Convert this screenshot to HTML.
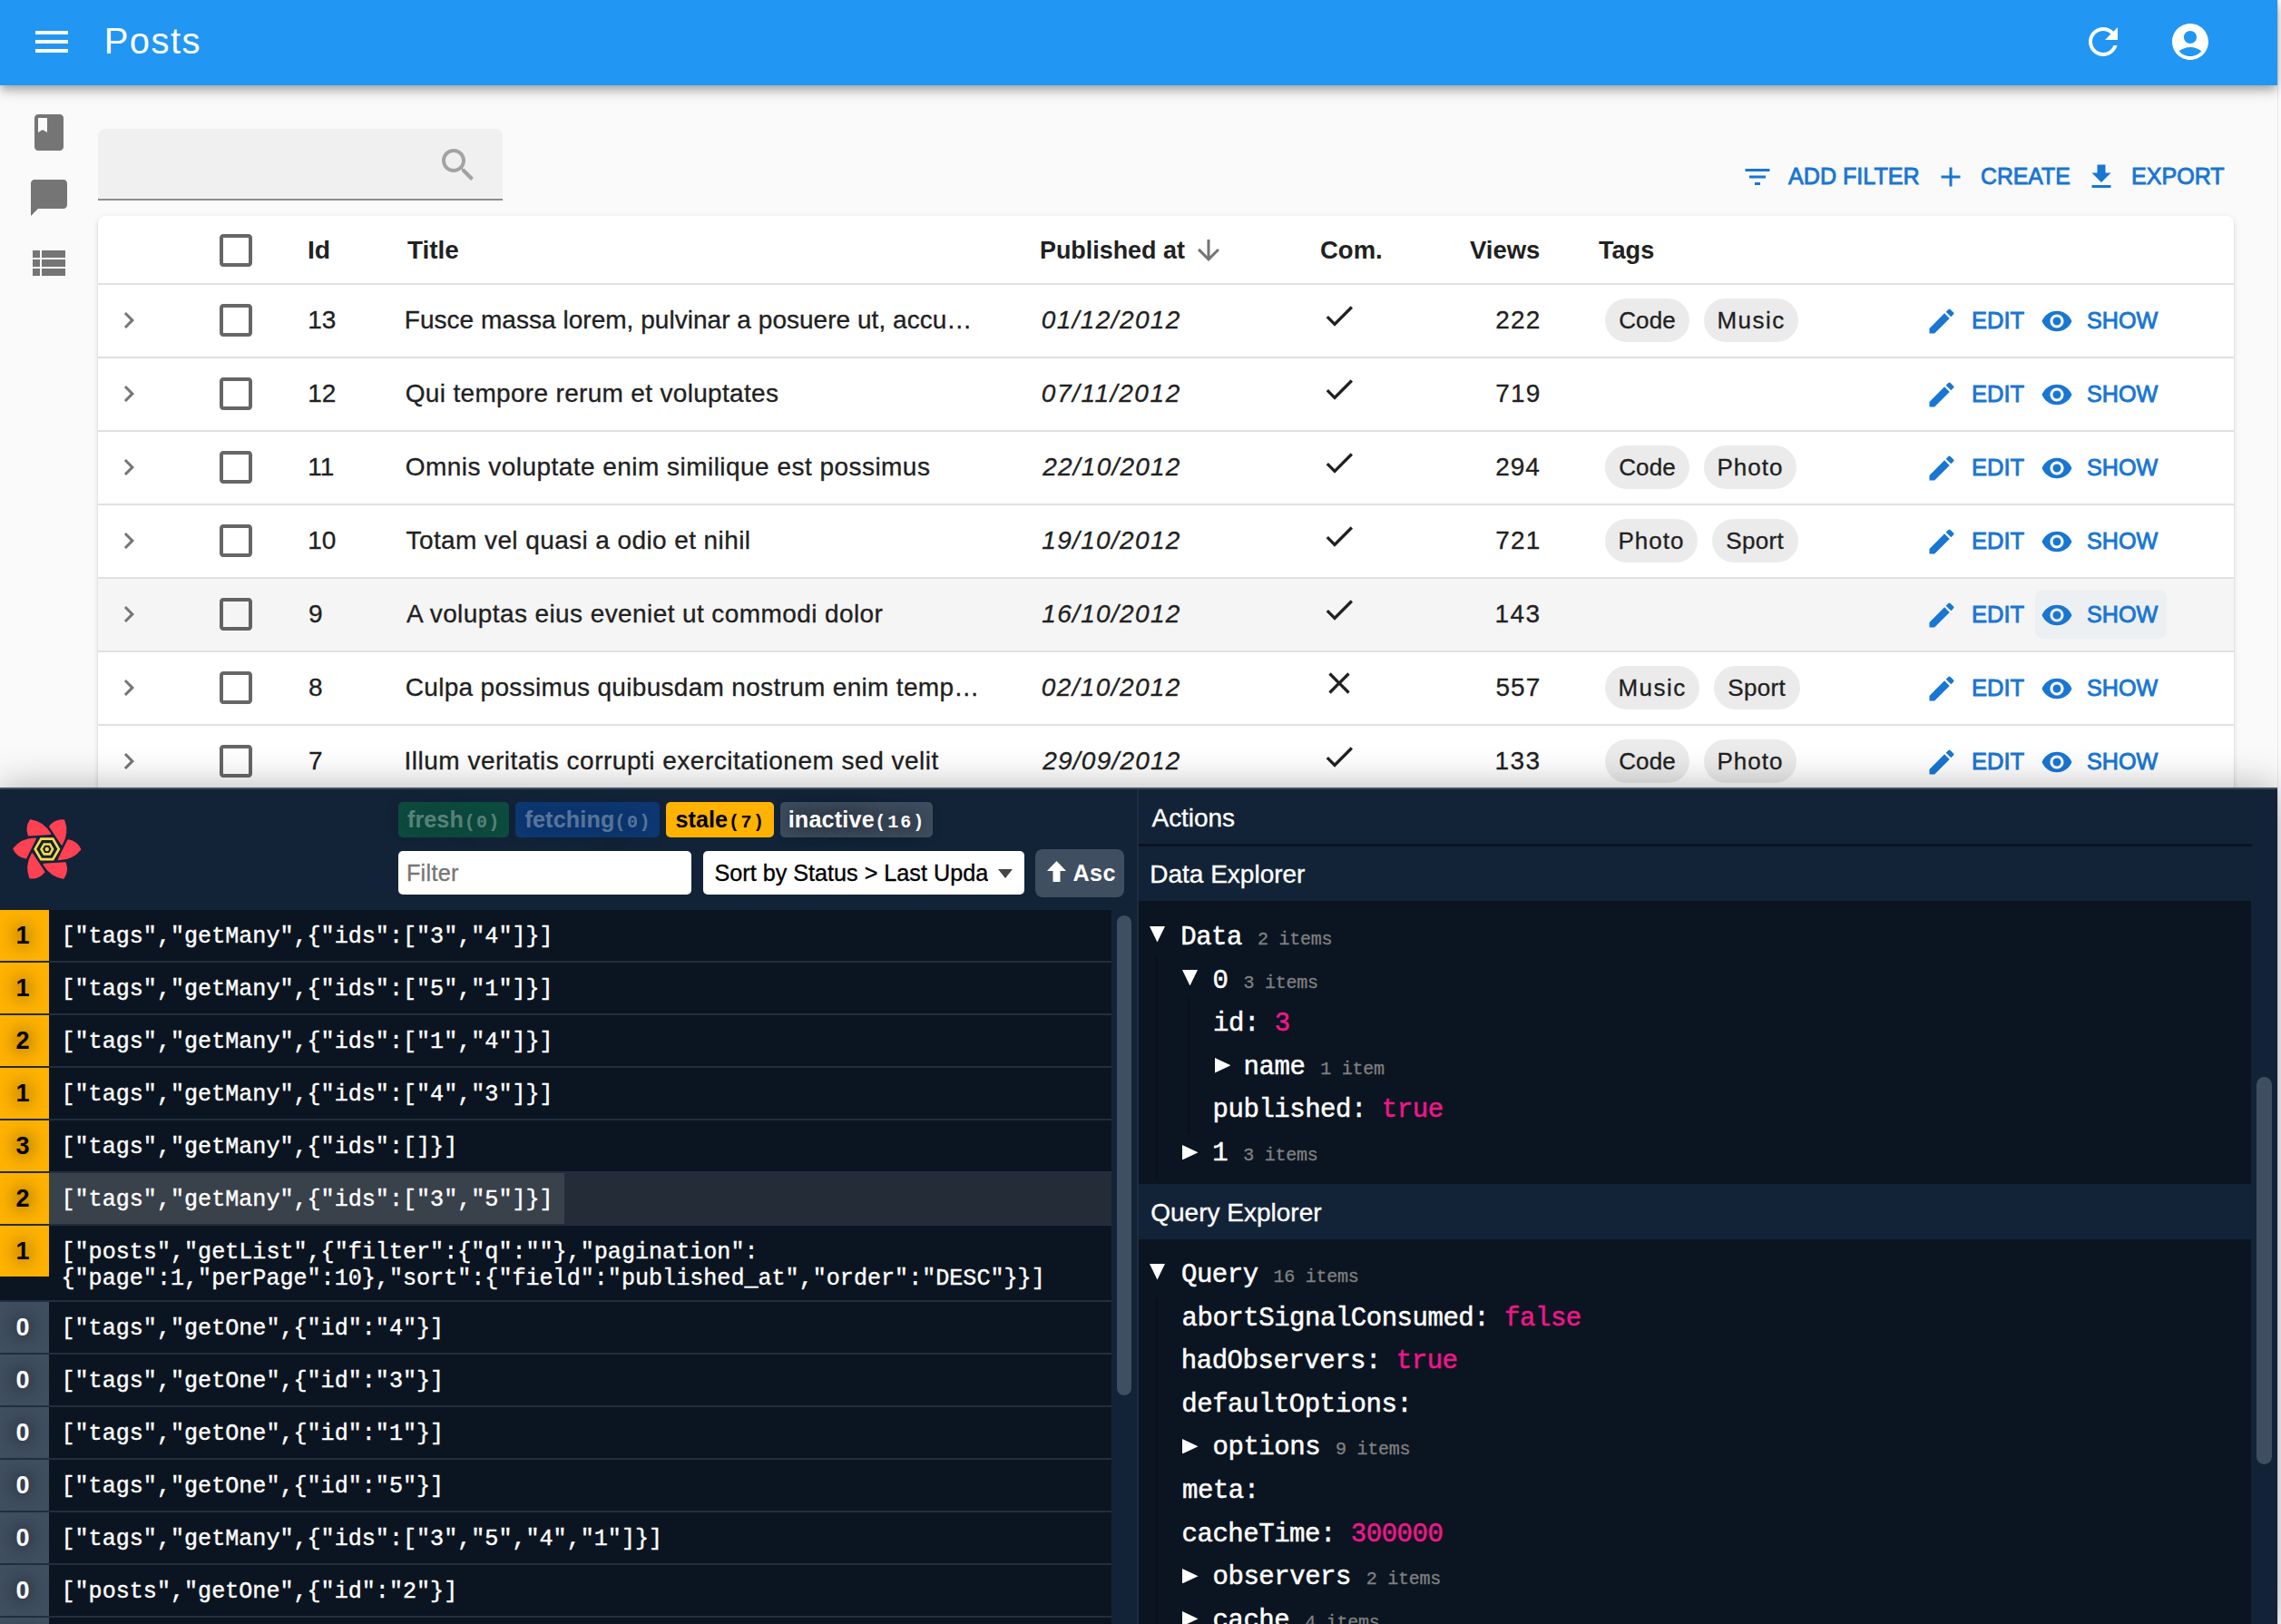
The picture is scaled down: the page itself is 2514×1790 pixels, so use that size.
<!DOCTYPE html>
<html><head><meta charset="utf-8"><title>Posts</title>
<style>
html,body{margin:0;padding:0;width:2514px;height:1790px;overflow:hidden;background:#fafafa;}
.t{position:absolute;white-space:pre;}
.b{position:absolute;box-sizing:border-box;}
.i{position:absolute;display:block;}
</style></head><body>
<div class="b" style="left:2510px;top:0px;width:4px;height:1790px;background:#fafafa;border-left:1px solid #e8e8e8;"></div>
<div class="b" style="left:0px;top:0px;width:2510px;height:94px;background:#2196f3;box-shadow:0px 4px 8px -2px rgba(0,0,0,0.2),0px 8px 10px 0px rgba(0,0,0,0.14),0px 2px 20px 0px rgba(0,0,0,0.12);z-index:2;"></div>
<div style="position:absolute;left:0;top:0;width:2510px;height:94px;z-index:3">
<svg class="i" style="left:32.75px;top:22px;" width="48" height="48" viewBox="0 0 24 24"><path fill="#fff" d="M3 18h18v-2H3v2zm0-5h18v-2H3v2zm0-7v2h18V6H3z"/></svg>
<div class="t" style="left:114.75px;top:15px;font-family:'Liberation Sans', sans-serif;font-size:40px;line-height:60px;color:#fff;letter-spacing:1.438px;">Posts</div>
<svg class="i" style="left:2294px;top:22px;" width="48" height="48" viewBox="0 0 24 24"><path fill="#fff" d="M17.65 6.35C16.2 4.9 14.21 4 12 4c-4.42 0-7.99 3.58-7.99 8s3.57 8 7.99 8c3.73 0 6.84-2.55 7.73-6h-2.08c-.82 2.33-3.04 4-5.65 4-3.31 0-6-2.69-6-6s2.69-6 6-6c1.66 0 3.14.69 4.22 1.78L13 11h7V4l-2.35 2.35z"/></svg>
<svg class="i" style="left:2390px;top:22px;" width="48" height="48" viewBox="0 0 24 24"><path fill="#fff" d="M12 2C6.48 2 2 6.48 2 12s4.48 10 10 10 10-4.48 10-10S17.52 2 12 2zm0 4c1.93 0 3.5 1.57 3.5 3.5S13.93 13 12 13s-3.5-1.57-3.5-3.5S10.07 6 12 6zm0 14c-2.03 0-4.43-.82-6.14-2.88C7.55 15.8 9.68 15 12 15s4.45.8 6.14 2.12C16.43 19.18 14.03 20 12 20z"/></svg>
</div>
<svg class="i" style="left:30px;top:122px;" width="48" height="48" viewBox="0 0 24 24"><path fill="#757575" d="M18 2H6c-1.1 0-2 .9-2 2v16c0 1.1.9 2 2 2h12c1.1 0 2-.9 2-2V4c0-1.1-.9-2-2-2zM6 4h5v8l-2.5-1.5L6 12V4z"/></svg>
<svg class="i" style="left:30px;top:194px;" width="48" height="48" viewBox="0 0 24 24"><path fill="#757575" d="M20 2H4c-1.1 0-2 .9-2 2v18l4-4h14c1.1 0 2-.9 2-2V4c0-1.1-.9-2-2-2z"/></svg>
<svg class="i" style="left:30px;top:266px;" width="48" height="48" viewBox="0 0 24 24"><path fill="#757575" d="M3 14h4v-4H3v4zm0 5h4v-4H3v4zM3 9h4V5H3v4zm5 5h13v-4H8v4zm0 5h13v-4H8v4zM8 5v4h13V5H8z"/></svg>
<div class="b" style="left:108px;top:142px;width:446px;height:79px;background:rgba(0,0,0,0.04);border-radius:8px 8px 0 0;border-bottom:2px solid rgba(0,0,0,0.42);"></div>
<svg class="i" style="left:481px;top:158px;" width="48" height="48" viewBox="0 0 24 24"><path fill="#a3a3a3" d="M15.5 14h-.79l-.28-.27C15.41 12.59 16 11.11 16 9.5 16 5.91 13.09 3 9.5 3S3 5.91 3 9.5 5.91 16 9.5 16c1.61 0 3.09-.59 4.23-1.57l.27.28v.79l5 4.99L20.49 19l-4.99-5zm-6 0C7.01 14 5 11.99 5 9.5S7.01 5 9.5 5 14 7.01 14 9.5 11.99 14 9.5 14z"/></svg>
<svg class="i" style="left:1918.5px;top:176.5px;" width="36" height="36" viewBox="0 0 24 24"><path fill="#1976d2" d="M10 18h4v-2h-4v2zM3 6v2h18V6H3zm3 7h12v-2H6v2z"/></svg>
<div class="t" style="left:1971.00px;top:164px;font-family:'Liberation Sans', sans-serif;font-size:26px;line-height:60px;color:#1976d2;transform:scaleX(0.9663);transform-origin:0 0;-webkit-text-stroke-width:0.9px;">ADD FILTER</div>
<svg class="i" style="left:2131.5px;top:176.5px;" width="36" height="36" viewBox="0 0 24 24"><path fill="#1976d2" d="M19 13h-6v6h-2v-6H5v-2h6V5h2v6h6v2z"/></svg>
<div class="t" style="left:2183.31px;top:164px;font-family:'Liberation Sans', sans-serif;font-size:26px;line-height:60px;color:#1976d2;transform:scaleX(0.9531);transform-origin:0 0;-webkit-text-stroke-width:0.9px;">CREATE</div>
<svg class="i" style="left:2298px;top:176.5px;" width="36" height="36" viewBox="0 0 24 24"><path fill="#1976d2" d="M19 9h-4V3H9v6H5l7 7 7-7zM5 18v2h14v-2H5z"/></svg>
<div class="t" style="left:2349.07px;top:164px;font-family:'Liberation Sans', sans-serif;font-size:26px;line-height:60px;color:#1976d2;transform:scaleX(0.9639);transform-origin:0 0;-webkit-text-stroke-width:0.9px;">EXPORT</div>
<div class="b" style="left:108px;top:238px;width:2354px;height:900px;background:#fff;border-radius:8px;box-shadow:0px 4px 2px -2px rgba(0,0,0,0.2),0px 2px 2px 0px rgba(0,0,0,0.14),0px 2px 6px 0px rgba(0,0,0,0.12);"></div>
<svg class="i" style="left:236px;top:252px;" width="48" height="48" viewBox="0 0 24 24"><path fill="rgba(0,0,0,0.6)" d="M19 5v14H5V5h14m0-2H5c-1.11 0-2 .9-2 2v14c0 1.1.89 2 2 2h14c1.1 0 2-.9 2-2V5c0-1.1-.9-2-2-2z"/></svg>
<div class="t" style="left:339.23px;top:246px;font-family:'Liberation Sans', sans-serif;font-size:28px;line-height:60px;color:#212121;font-weight:700;transform:scaleX(1.0118);transform-origin:0 0;">Id</div>
<div class="t" style="left:448.50px;top:246px;font-family:'Liberation Sans', sans-serif;font-size:28px;line-height:60px;color:#212121;font-weight:700;transform:scaleX(0.9955);transform-origin:0 0;">Title</div>
<div class="t" style="left:1146.32px;top:246px;font-family:'Liberation Sans', sans-serif;font-size:28px;line-height:60px;color:#212121;font-weight:700;transform:scaleX(0.9605);transform-origin:0 0;">Published at</div>
<svg class="i" style="left:1314px;top:258px;" width="36" height="36" viewBox="0 0 24 24"><path fill="#757575" d="M20 12l-1.41-1.41L13 16.17V4h-2v12.17l-5.58-5.59L4 12l8 8 8-8z"/></svg>
<div class="t" style="left:1455.02px;top:246px;font-family:'Liberation Sans', sans-serif;font-size:28px;line-height:60px;color:#212121;font-weight:700;transform:scaleX(0.9814);transform-origin:0 0;">Com.</div>
<div class="t" style="left:1619.75px;top:246px;font-family:'Liberation Sans', sans-serif;font-size:28px;line-height:60px;color:#212121;font-weight:700;transform:scaleX(0.9806);transform-origin:0 0;">Views</div>
<div class="t" style="left:1761.76px;top:246px;font-family:'Liberation Sans', sans-serif;font-size:28px;line-height:60px;color:#212121;font-weight:700;transform:scaleX(0.9677);transform-origin:0 0;">Tags</div>
<div class="b" style="left:108px;top:312px;width:2354px;height:2px;background:#e0e0e0;"></div>
<div class="b" style="left:108px;top:393px;width:2354px;height:2px;background:#e0e0e0;"></div>
<svg class="i" style="left:124px;top:334.5px;" width="36" height="36" viewBox="0 0 24 24"><path fill="#757575" d="M10 6 8.59 7.41 13.17 12l-4.58 4.59L10 18l6-6z"/></svg>
<svg class="i" style="left:236px;top:329px;" width="48" height="48" viewBox="0 0 24 24"><path fill="rgba(0,0,0,0.6)" d="M19 5v14H5V5h14m0-2H5c-1.11 0-2 .9-2 2v14c0 1.1.89 2 2 2h14c1.1 0 2-.9 2-2V5c0-1.1-.9-2-2-2z"/></svg>
<div class="t" style="left:339.25px;top:323px;font-family:'Liberation Sans', sans-serif;font-size:28px;line-height:60px;color:#212121;-webkit-text-stroke-width:0.3px;">13</div>
<div class="t" style="left:445.75px;top:323px;font-family:'Liberation Sans', sans-serif;font-size:28px;line-height:60px;color:#212121;letter-spacing:0.033px;-webkit-text-stroke-width:0.3px;">Fusce massa lorem, pulvinar a posuere ut, accu…</div>
<div class="t" style="left:1147.75px;top:323px;font-family:'Liberation Sans', sans-serif;font-size:28px;line-height:60px;color:#212121;font-style:italic;letter-spacing:1.389px;-webkit-text-stroke-width:0.3px;">01/12/2012</div>
<svg class="i" style="left:1456px;top:328px;" width="40" height="40" viewBox="0 0 24 24"><path fill="#212121" d="M9 16.2 4.8 12l-1.4 1.4L9 19 21 7l-1.4-1.4L9 16.2z"/></svg>
<div class="t" style="left:1648.25px;top:323px;font-family:'Liberation Sans', sans-serif;font-size:28px;line-height:60px;color:#212121;letter-spacing:1.125px;-webkit-text-stroke-width:0.3px;">222</div>
<div class="b" style="left:1769px;top:329px;width:93px;height:48px;background:#ebebeb;border-radius:24px;"></div>
<div class="t" style="left:1784.25px;top:323px;font-family:'Liberation Sans', sans-serif;font-size:26px;line-height:60px;color:#212121;letter-spacing:0.083px;-webkit-text-stroke-width:0.3px;">Code</div>
<div class="b" style="left:1878px;top:329px;width:104px;height:48px;background:#ebebeb;border-radius:24px;"></div>
<div class="t" style="left:1892.50px;top:323px;font-family:'Liberation Sans', sans-serif;font-size:26px;line-height:60px;color:#212121;letter-spacing:1.438px;-webkit-text-stroke-width:0.3px;">Music</div>
<svg class="i" style="left:2121.5px;top:335.5px;" width="36" height="36" viewBox="0 0 24 24"><path fill="#1976d2" d="M3 17.25V21h3.75L17.81 9.94l-3.75-3.75L3 17.25zM20.71 7.04c.39-.39.39-1.02 0-1.41l-2.34-2.34a.9959.9959 0 0 0-1.41 0l-1.83 1.83 3.75 3.75 1.83-1.83z"/></svg>
<div class="t" style="left:2173.04px;top:323px;font-family:'Liberation Sans', sans-serif;font-size:26px;line-height:60px;color:#1976d2;transform:scaleX(0.9823);transform-origin:0 0;-webkit-text-stroke-width:0.9px;">EDIT</div>
<svg class="i" style="left:2248.5px;top:335.5px;" width="36" height="36" viewBox="0 0 24 24"><path fill="#1976d2" d="M12 4.5C7 4.5 2.73 7.61 1 12c1.73 4.39 6 7.5 11 7.5s9.27-3.11 11-7.5c-1.73-4.39-6-7.5-11-7.5zM12 17c-2.76 0-5-2.24-5-5s2.24-5 5-5 5 2.24 5 5-2.24 5-5 5zm0-8c-1.66 0-3 1.34-3 3s1.34 3 3 3 3-1.34 3-3-1.34-3-3-3z"/></svg>
<div class="t" style="left:2299.79px;top:323px;font-family:'Liberation Sans', sans-serif;font-size:26px;line-height:60px;color:#1976d2;transform:scaleX(0.9686);transform-origin:0 0;-webkit-text-stroke-width:0.9px;">SHOW</div>
<div class="b" style="left:108px;top:474px;width:2354px;height:2px;background:#e0e0e0;"></div>
<svg class="i" style="left:124px;top:415.5px;" width="36" height="36" viewBox="0 0 24 24"><path fill="#757575" d="M10 6 8.59 7.41 13.17 12l-4.58 4.59L10 18l6-6z"/></svg>
<svg class="i" style="left:236px;top:410px;" width="48" height="48" viewBox="0 0 24 24"><path fill="rgba(0,0,0,0.6)" d="M19 5v14H5V5h14m0-2H5c-1.11 0-2 .9-2 2v14c0 1.1.89 2 2 2h14c1.1 0 2-.9 2-2V5c0-1.1-.9-2-2-2z"/></svg>
<div class="t" style="left:339.25px;top:404px;font-family:'Liberation Sans', sans-serif;font-size:28px;line-height:60px;color:#212121;-webkit-text-stroke-width:0.3px;">12</div>
<div class="t" style="left:446.75px;top:404px;font-family:'Liberation Sans', sans-serif;font-size:28px;line-height:60px;color:#212121;letter-spacing:0.325px;-webkit-text-stroke-width:0.3px;">Qui tempore rerum et voluptates</div>
<div class="t" style="left:1147.75px;top:404px;font-family:'Liberation Sans', sans-serif;font-size:28px;line-height:60px;color:#212121;font-style:italic;letter-spacing:1.611px;-webkit-text-stroke-width:0.3px;">07/11/2012</div>
<svg class="i" style="left:1456px;top:409px;" width="40" height="40" viewBox="0 0 24 24"><path fill="#212121" d="M9 16.2 4.8 12l-1.4 1.4L9 19 21 7l-1.4-1.4L9 16.2z"/></svg>
<div class="t" style="left:1648.25px;top:404px;font-family:'Liberation Sans', sans-serif;font-size:28px;line-height:60px;color:#212121;letter-spacing:1.125px;-webkit-text-stroke-width:0.3px;">719</div>
<svg class="i" style="left:2121.5px;top:416.5px;" width="36" height="36" viewBox="0 0 24 24"><path fill="#1976d2" d="M3 17.25V21h3.75L17.81 9.94l-3.75-3.75L3 17.25zM20.71 7.04c.39-.39.39-1.02 0-1.41l-2.34-2.34a.9959.9959 0 0 0-1.41 0l-1.83 1.83 3.75 3.75 1.83-1.83z"/></svg>
<div class="t" style="left:2173.04px;top:404px;font-family:'Liberation Sans', sans-serif;font-size:26px;line-height:60px;color:#1976d2;transform:scaleX(0.9823);transform-origin:0 0;-webkit-text-stroke-width:0.9px;">EDIT</div>
<svg class="i" style="left:2248.5px;top:416.5px;" width="36" height="36" viewBox="0 0 24 24"><path fill="#1976d2" d="M12 4.5C7 4.5 2.73 7.61 1 12c1.73 4.39 6 7.5 11 7.5s9.27-3.11 11-7.5c-1.73-4.39-6-7.5-11-7.5zM12 17c-2.76 0-5-2.24-5-5s2.24-5 5-5 5 2.24 5 5-2.24 5-5 5zm0-8c-1.66 0-3 1.34-3 3s1.34 3 3 3 3-1.34 3-3-1.34-3-3-3z"/></svg>
<div class="t" style="left:2299.79px;top:404px;font-family:'Liberation Sans', sans-serif;font-size:26px;line-height:60px;color:#1976d2;transform:scaleX(0.9686);transform-origin:0 0;-webkit-text-stroke-width:0.9px;">SHOW</div>
<div class="b" style="left:108px;top:555px;width:2354px;height:2px;background:#e0e0e0;"></div>
<svg class="i" style="left:124px;top:496.5px;" width="36" height="36" viewBox="0 0 24 24"><path fill="#757575" d="M10 6 8.59 7.41 13.17 12l-4.58 4.59L10 18l6-6z"/></svg>
<svg class="i" style="left:236px;top:491px;" width="48" height="48" viewBox="0 0 24 24"><path fill="rgba(0,0,0,0.6)" d="M19 5v14H5V5h14m0-2H5c-1.11 0-2 .9-2 2v14c0 1.1.89 2 2 2h14c1.1 0 2-.9 2-2V5c0-1.1-.9-2-2-2z"/></svg>
<div class="t" style="left:339.25px;top:485px;font-family:'Liberation Sans', sans-serif;font-size:28px;line-height:60px;color:#212121;-webkit-text-stroke-width:0.3px;">11</div>
<div class="t" style="left:446.75px;top:485px;font-family:'Liberation Sans', sans-serif;font-size:28px;line-height:60px;color:#212121;letter-spacing:0.464px;-webkit-text-stroke-width:0.3px;">Omnis voluptate enim similique est possimus</div>
<div class="t" style="left:1149.25px;top:485px;font-family:'Liberation Sans', sans-serif;font-size:28px;line-height:60px;color:#212121;font-style:italic;letter-spacing:1.222px;-webkit-text-stroke-width:0.3px;">22/10/2012</div>
<svg class="i" style="left:1456px;top:490px;" width="40" height="40" viewBox="0 0 24 24"><path fill="#212121" d="M9 16.2 4.8 12l-1.4 1.4L9 19 21 7l-1.4-1.4L9 16.2z"/></svg>
<div class="t" style="left:1648.25px;top:485px;font-family:'Liberation Sans', sans-serif;font-size:28px;line-height:60px;color:#212121;letter-spacing:0.875px;-webkit-text-stroke-width:0.3px;">294</div>
<div class="b" style="left:1769px;top:491px;width:93px;height:48px;background:#ebebeb;border-radius:24px;"></div>
<div class="t" style="left:1784.25px;top:485px;font-family:'Liberation Sans', sans-serif;font-size:26px;line-height:60px;color:#212121;letter-spacing:0.083px;-webkit-text-stroke-width:0.3px;">Code</div>
<div class="b" style="left:1878px;top:491px;width:102px;height:48px;background:#ebebeb;border-radius:24px;"></div>
<div class="t" style="left:1892.50px;top:485px;font-family:'Liberation Sans', sans-serif;font-size:26px;line-height:60px;color:#212121;letter-spacing:1.000px;-webkit-text-stroke-width:0.3px;">Photo</div>
<svg class="i" style="left:2121.5px;top:497.5px;" width="36" height="36" viewBox="0 0 24 24"><path fill="#1976d2" d="M3 17.25V21h3.75L17.81 9.94l-3.75-3.75L3 17.25zM20.71 7.04c.39-.39.39-1.02 0-1.41l-2.34-2.34a.9959.9959 0 0 0-1.41 0l-1.83 1.83 3.75 3.75 1.83-1.83z"/></svg>
<div class="t" style="left:2173.04px;top:485px;font-family:'Liberation Sans', sans-serif;font-size:26px;line-height:60px;color:#1976d2;transform:scaleX(0.9823);transform-origin:0 0;-webkit-text-stroke-width:0.9px;">EDIT</div>
<svg class="i" style="left:2248.5px;top:497.5px;" width="36" height="36" viewBox="0 0 24 24"><path fill="#1976d2" d="M12 4.5C7 4.5 2.73 7.61 1 12c1.73 4.39 6 7.5 11 7.5s9.27-3.11 11-7.5c-1.73-4.39-6-7.5-11-7.5zM12 17c-2.76 0-5-2.24-5-5s2.24-5 5-5 5 2.24 5 5-2.24 5-5 5zm0-8c-1.66 0-3 1.34-3 3s1.34 3 3 3 3-1.34 3-3-1.34-3-3-3z"/></svg>
<div class="t" style="left:2299.79px;top:485px;font-family:'Liberation Sans', sans-serif;font-size:26px;line-height:60px;color:#1976d2;transform:scaleX(0.9686);transform-origin:0 0;-webkit-text-stroke-width:0.9px;">SHOW</div>
<div class="b" style="left:108px;top:636px;width:2354px;height:2px;background:#e0e0e0;"></div>
<svg class="i" style="left:124px;top:577.5px;" width="36" height="36" viewBox="0 0 24 24"><path fill="#757575" d="M10 6 8.59 7.41 13.17 12l-4.58 4.59L10 18l6-6z"/></svg>
<svg class="i" style="left:236px;top:572px;" width="48" height="48" viewBox="0 0 24 24"><path fill="rgba(0,0,0,0.6)" d="M19 5v14H5V5h14m0-2H5c-1.11 0-2 .9-2 2v14c0 1.1.89 2 2 2h14c1.1 0 2-.9 2-2V5c0-1.1-.9-2-2-2z"/></svg>
<div class="t" style="left:339.25px;top:566px;font-family:'Liberation Sans', sans-serif;font-size:28px;line-height:60px;color:#212121;-webkit-text-stroke-width:0.3px;">10</div>
<div class="t" style="left:447.50px;top:566px;font-family:'Liberation Sans', sans-serif;font-size:28px;line-height:60px;color:#212121;letter-spacing:0.408px;-webkit-text-stroke-width:0.3px;">Totam vel quasi a odio et nihil</div>
<div class="t" style="left:1148.25px;top:566px;font-family:'Liberation Sans', sans-serif;font-size:28px;line-height:60px;color:#212121;font-style:italic;letter-spacing:1.333px;-webkit-text-stroke-width:0.3px;">19/10/2012</div>
<svg class="i" style="left:1456px;top:571px;" width="40" height="40" viewBox="0 0 24 24"><path fill="#212121" d="M9 16.2 4.8 12l-1.4 1.4L9 19 21 7l-1.4-1.4L9 16.2z"/></svg>
<div class="t" style="left:1648.25px;top:566px;font-family:'Liberation Sans', sans-serif;font-size:28px;line-height:60px;color:#212121;letter-spacing:1.125px;-webkit-text-stroke-width:0.3px;">721</div>
<div class="b" style="left:1769px;top:572px;width:102px;height:48px;background:#ebebeb;border-radius:24px;"></div>
<div class="t" style="left:1783.50px;top:566px;font-family:'Liberation Sans', sans-serif;font-size:26px;line-height:60px;color:#212121;letter-spacing:1.000px;-webkit-text-stroke-width:0.3px;">Photo</div>
<div class="b" style="left:1887px;top:572px;width:95px;height:48px;background:#ebebeb;border-radius:24px;"></div>
<div class="t" style="left:1902.25px;top:566px;font-family:'Liberation Sans', sans-serif;font-size:26px;line-height:60px;color:#212121;letter-spacing:0.312px;-webkit-text-stroke-width:0.3px;">Sport</div>
<svg class="i" style="left:2121.5px;top:578.5px;" width="36" height="36" viewBox="0 0 24 24"><path fill="#1976d2" d="M3 17.25V21h3.75L17.81 9.94l-3.75-3.75L3 17.25zM20.71 7.04c.39-.39.39-1.02 0-1.41l-2.34-2.34a.9959.9959 0 0 0-1.41 0l-1.83 1.83 3.75 3.75 1.83-1.83z"/></svg>
<div class="t" style="left:2173.04px;top:566px;font-family:'Liberation Sans', sans-serif;font-size:26px;line-height:60px;color:#1976d2;transform:scaleX(0.9823);transform-origin:0 0;-webkit-text-stroke-width:0.9px;">EDIT</div>
<svg class="i" style="left:2248.5px;top:578.5px;" width="36" height="36" viewBox="0 0 24 24"><path fill="#1976d2" d="M12 4.5C7 4.5 2.73 7.61 1 12c1.73 4.39 6 7.5 11 7.5s9.27-3.11 11-7.5c-1.73-4.39-6-7.5-11-7.5zM12 17c-2.76 0-5-2.24-5-5s2.24-5 5-5 5 2.24 5 5-2.24 5-5 5zm0-8c-1.66 0-3 1.34-3 3s1.34 3 3 3 3-1.34 3-3-1.34-3-3-3z"/></svg>
<div class="t" style="left:2299.79px;top:566px;font-family:'Liberation Sans', sans-serif;font-size:26px;line-height:60px;color:#1976d2;transform:scaleX(0.9686);transform-origin:0 0;-webkit-text-stroke-width:0.9px;">SHOW</div>
<div class="b" style="left:108px;top:638px;width:2354px;height:79px;background:#f5f5f5;"></div>
<div class="b" style="left:2243px;top:650px;width:145px;height:54px;background:rgba(25,118,210,0.035);border-radius:8px;"></div>
<div class="b" style="left:108px;top:717px;width:2354px;height:2px;background:#e0e0e0;"></div>
<svg class="i" style="left:124px;top:658.5px;" width="36" height="36" viewBox="0 0 24 24"><path fill="#757575" d="M10 6 8.59 7.41 13.17 12l-4.58 4.59L10 18l6-6z"/></svg>
<svg class="i" style="left:236px;top:653px;" width="48" height="48" viewBox="0 0 24 24"><path fill="rgba(0,0,0,0.6)" d="M19 5v14H5V5h14m0-2H5c-1.11 0-2 .9-2 2v14c0 1.1.89 2 2 2h14c1.1 0 2-.9 2-2V5c0-1.1-.9-2-2-2z"/></svg>
<div class="t" style="left:340.00px;top:647px;font-family:'Liberation Sans', sans-serif;font-size:28px;line-height:60px;color:#212121;-webkit-text-stroke-width:0.3px;">9</div>
<div class="t" style="left:448.00px;top:647px;font-family:'Liberation Sans', sans-serif;font-size:28px;line-height:60px;color:#212121;letter-spacing:0.409px;-webkit-text-stroke-width:0.3px;">A voluptas eius eveniet ut commodi dolor</div>
<div class="t" style="left:1148.25px;top:647px;font-family:'Liberation Sans', sans-serif;font-size:28px;line-height:60px;color:#212121;font-style:italic;letter-spacing:1.333px;-webkit-text-stroke-width:0.3px;">16/10/2012</div>
<svg class="i" style="left:1456px;top:652px;" width="40" height="40" viewBox="0 0 24 24"><path fill="#212121" d="M9 16.2 4.8 12l-1.4 1.4L9 19 21 7l-1.4-1.4L9 16.2z"/></svg>
<div class="t" style="left:1647.50px;top:647px;font-family:'Liberation Sans', sans-serif;font-size:28px;line-height:60px;color:#212121;letter-spacing:1.375px;-webkit-text-stroke-width:0.3px;">143</div>
<svg class="i" style="left:2121.5px;top:659.5px;" width="36" height="36" viewBox="0 0 24 24"><path fill="#1976d2" d="M3 17.25V21h3.75L17.81 9.94l-3.75-3.75L3 17.25zM20.71 7.04c.39-.39.39-1.02 0-1.41l-2.34-2.34a.9959.9959 0 0 0-1.41 0l-1.83 1.83 3.75 3.75 1.83-1.83z"/></svg>
<div class="t" style="left:2173.04px;top:647px;font-family:'Liberation Sans', sans-serif;font-size:26px;line-height:60px;color:#1976d2;transform:scaleX(0.9823);transform-origin:0 0;-webkit-text-stroke-width:0.9px;">EDIT</div>
<svg class="i" style="left:2248.5px;top:659.5px;" width="36" height="36" viewBox="0 0 24 24"><path fill="#1976d2" d="M12 4.5C7 4.5 2.73 7.61 1 12c1.73 4.39 6 7.5 11 7.5s9.27-3.11 11-7.5c-1.73-4.39-6-7.5-11-7.5zM12 17c-2.76 0-5-2.24-5-5s2.24-5 5-5 5 2.24 5 5-2.24 5-5 5zm0-8c-1.66 0-3 1.34-3 3s1.34 3 3 3 3-1.34 3-3-1.34-3-3-3z"/></svg>
<div class="t" style="left:2299.79px;top:647px;font-family:'Liberation Sans', sans-serif;font-size:26px;line-height:60px;color:#1976d2;transform:scaleX(0.9686);transform-origin:0 0;-webkit-text-stroke-width:0.9px;">SHOW</div>
<div class="b" style="left:108px;top:798px;width:2354px;height:2px;background:#e0e0e0;"></div>
<svg class="i" style="left:124px;top:739.5px;" width="36" height="36" viewBox="0 0 24 24"><path fill="#757575" d="M10 6 8.59 7.41 13.17 12l-4.58 4.59L10 18l6-6z"/></svg>
<svg class="i" style="left:236px;top:734px;" width="48" height="48" viewBox="0 0 24 24"><path fill="rgba(0,0,0,0.6)" d="M19 5v14H5V5h14m0-2H5c-1.11 0-2 .9-2 2v14c0 1.1.89 2 2 2h14c1.1 0 2-.9 2-2V5c0-1.1-.9-2-2-2z"/></svg>
<div class="t" style="left:340.00px;top:728px;font-family:'Liberation Sans', sans-serif;font-size:28px;line-height:60px;color:#212121;-webkit-text-stroke-width:0.3px;">8</div>
<div class="t" style="left:446.75px;top:728px;font-family:'Liberation Sans', sans-serif;font-size:28px;line-height:60px;color:#212121;letter-spacing:0.314px;-webkit-text-stroke-width:0.3px;">Culpa possimus quibusdam nostrum enim temp…</div>
<div class="t" style="left:1147.75px;top:728px;font-family:'Liberation Sans', sans-serif;font-size:28px;line-height:60px;color:#212121;font-style:italic;letter-spacing:1.389px;-webkit-text-stroke-width:0.3px;">02/10/2012</div>
<svg class="i" style="left:1456px;top:733px;" width="40" height="40" viewBox="0 0 24 24"><path fill="#212121" d="M19 6.41 17.59 5 12 10.59 6.41 5 5 6.41 10.59 12 5 17.59 6.41 19 12 13.41 17.59 19 19 17.59 13.41 12z"/></svg>
<div class="t" style="left:1648.50px;top:728px;font-family:'Liberation Sans', sans-serif;font-size:28px;line-height:60px;color:#212121;letter-spacing:1.000px;-webkit-text-stroke-width:0.3px;">557</div>
<div class="b" style="left:1769px;top:734px;width:104px;height:48px;background:#ebebeb;border-radius:24px;"></div>
<div class="t" style="left:1783.50px;top:728px;font-family:'Liberation Sans', sans-serif;font-size:26px;line-height:60px;color:#212121;letter-spacing:1.438px;-webkit-text-stroke-width:0.3px;">Music</div>
<div class="b" style="left:1889px;top:734px;width:95px;height:48px;background:#ebebeb;border-radius:24px;"></div>
<div class="t" style="left:1904.25px;top:728px;font-family:'Liberation Sans', sans-serif;font-size:26px;line-height:60px;color:#212121;letter-spacing:0.312px;-webkit-text-stroke-width:0.3px;">Sport</div>
<svg class="i" style="left:2121.5px;top:740.5px;" width="36" height="36" viewBox="0 0 24 24"><path fill="#1976d2" d="M3 17.25V21h3.75L17.81 9.94l-3.75-3.75L3 17.25zM20.71 7.04c.39-.39.39-1.02 0-1.41l-2.34-2.34a.9959.9959 0 0 0-1.41 0l-1.83 1.83 3.75 3.75 1.83-1.83z"/></svg>
<div class="t" style="left:2173.04px;top:728px;font-family:'Liberation Sans', sans-serif;font-size:26px;line-height:60px;color:#1976d2;transform:scaleX(0.9823);transform-origin:0 0;-webkit-text-stroke-width:0.9px;">EDIT</div>
<svg class="i" style="left:2248.5px;top:740.5px;" width="36" height="36" viewBox="0 0 24 24"><path fill="#1976d2" d="M12 4.5C7 4.5 2.73 7.61 1 12c1.73 4.39 6 7.5 11 7.5s9.27-3.11 11-7.5c-1.73-4.39-6-7.5-11-7.5zM12 17c-2.76 0-5-2.24-5-5s2.24-5 5-5 5 2.24 5 5-2.24 5-5 5zm0-8c-1.66 0-3 1.34-3 3s1.34 3 3 3 3-1.34 3-3-1.34-3-3-3z"/></svg>
<div class="t" style="left:2299.79px;top:728px;font-family:'Liberation Sans', sans-serif;font-size:26px;line-height:60px;color:#1976d2;transform:scaleX(0.9686);transform-origin:0 0;-webkit-text-stroke-width:0.9px;">SHOW</div>
<div class="b" style="left:108px;top:879px;width:2354px;height:2px;background:#e0e0e0;"></div>
<svg class="i" style="left:124px;top:820.5px;" width="36" height="36" viewBox="0 0 24 24"><path fill="#757575" d="M10 6 8.59 7.41 13.17 12l-4.58 4.59L10 18l6-6z"/></svg>
<svg class="i" style="left:236px;top:815px;" width="48" height="48" viewBox="0 0 24 24"><path fill="rgba(0,0,0,0.6)" d="M19 5v14H5V5h14m0-2H5c-1.11 0-2 .9-2 2v14c0 1.1.89 2 2 2h14c1.1 0 2-.9 2-2V5c0-1.1-.9-2-2-2z"/></svg>
<div class="t" style="left:340.00px;top:809px;font-family:'Liberation Sans', sans-serif;font-size:28px;line-height:60px;color:#212121;-webkit-text-stroke-width:0.3px;">7</div>
<div class="t" style="left:445.50px;top:809px;font-family:'Liberation Sans', sans-serif;font-size:28px;line-height:60px;color:#212121;letter-spacing:0.498px;-webkit-text-stroke-width:0.3px;">Illum veritatis corrupti exercitationem sed velit</div>
<div class="t" style="left:1149.25px;top:809px;font-family:'Liberation Sans', sans-serif;font-size:28px;line-height:60px;color:#212121;font-style:italic;letter-spacing:1.222px;-webkit-text-stroke-width:0.3px;">29/09/2012</div>
<svg class="i" style="left:1456px;top:814px;" width="40" height="40" viewBox="0 0 24 24"><path fill="#212121" d="M9 16.2 4.8 12l-1.4 1.4L9 19 21 7l-1.4-1.4L9 16.2z"/></svg>
<div class="t" style="left:1647.50px;top:809px;font-family:'Liberation Sans', sans-serif;font-size:28px;line-height:60px;color:#212121;letter-spacing:1.375px;-webkit-text-stroke-width:0.3px;">133</div>
<div class="b" style="left:1769px;top:815px;width:93px;height:48px;background:#ebebeb;border-radius:24px;"></div>
<div class="t" style="left:1784.25px;top:809px;font-family:'Liberation Sans', sans-serif;font-size:26px;line-height:60px;color:#212121;letter-spacing:0.083px;-webkit-text-stroke-width:0.3px;">Code</div>
<div class="b" style="left:1878px;top:815px;width:102px;height:48px;background:#ebebeb;border-radius:24px;"></div>
<div class="t" style="left:1892.50px;top:809px;font-family:'Liberation Sans', sans-serif;font-size:26px;line-height:60px;color:#212121;letter-spacing:1.000px;-webkit-text-stroke-width:0.3px;">Photo</div>
<svg class="i" style="left:2121.5px;top:821.5px;" width="36" height="36" viewBox="0 0 24 24"><path fill="#1976d2" d="M3 17.25V21h3.75L17.81 9.94l-3.75-3.75L3 17.25zM20.71 7.04c.39-.39.39-1.02 0-1.41l-2.34-2.34a.9959.9959 0 0 0-1.41 0l-1.83 1.83 3.75 3.75 1.83-1.83z"/></svg>
<div class="t" style="left:2173.04px;top:809px;font-family:'Liberation Sans', sans-serif;font-size:26px;line-height:60px;color:#1976d2;transform:scaleX(0.9823);transform-origin:0 0;-webkit-text-stroke-width:0.9px;">EDIT</div>
<svg class="i" style="left:2248.5px;top:821.5px;" width="36" height="36" viewBox="0 0 24 24"><path fill="#1976d2" d="M12 4.5C7 4.5 2.73 7.61 1 12c1.73 4.39 6 7.5 11 7.5s9.27-3.11 11-7.5c-1.73-4.39-6-7.5-11-7.5zM12 17c-2.76 0-5-2.24-5-5s2.24-5 5-5 5 2.24 5 5-2.24 5-5 5zm0-8c-1.66 0-3 1.34-3 3s1.34 3 3 3 3-1.34 3-3-1.34-3-3-3z"/></svg>
<div class="t" style="left:2299.79px;top:809px;font-family:'Liberation Sans', sans-serif;font-size:26px;line-height:60px;color:#1976d2;transform:scaleX(0.9686);transform-origin:0 0;-webkit-text-stroke-width:0.9px;">SHOW</div>
<div style="position:absolute;left:0;top:868px;width:2510px;height:922px;background:#0b1521;box-shadow:0 0 40px rgba(0,0,0,0.3);z-index:10;overflow:hidden">
<div class="b" style="left:0px;top:0px;width:2510px;height:2px;background:#3f4e60;"></div>
<div class="b" style="left:0px;top:2px;width:1253px;height:133px;background:#132337;"></div>
<div class="b" style="left:1225px;top:135px;width:28px;height:787px;background:#132337;"></div>
<div class="b" style="left:1231px;top:141px;width:16px;height:529px;background:#3f4e60;border-radius:8px;"></div>
<div class="b" style="left:1253px;top:2px;width:2px;height:920px;background:#1d2b3c;"></div>
<div class="b" style="left:1255px;top:2px;width:1255px;height:920px;background:#132337;"></div>
<div class="b" style="left:1255px;top:62px;width:1227px;height:3px;background:#0b1521;"></div>
<div class="b" style="left:1255px;top:125px;width:1226px;height:312px;background:#0b1521;"></div>
<div class="b" style="left:1255px;top:498px;width:1226px;height:424px;background:#0b1521;"></div>
<div class="b" style="left:2487px;top:319px;width:17px;height:427px;background:#3f4e60;border-radius:9px;"></div>
<svg class="i" style="left:5px;top:22px" width="95" height="95" viewBox="0 0 1624 1624"><g transform="translate(800,785)"><g fill="#ff4154" stroke="#ff4154" stroke-width="34" stroke-linejoin="round"><path d="M -220,-195 L -400,165 Q -560,135 -625,-5 Q -480,-190 -220,-195 Z" transform="rotate(0)"/><path d="M -220,-195 L -400,165 Q -560,135 -625,-5 Q -480,-190 -220,-195 Z" transform="rotate(60)"/><path d="M -220,-195 L -400,165 Q -560,135 -625,-5 Q -480,-190 -220,-195 Z" transform="rotate(120)"/><path d="M -220,-195 L -400,165 Q -560,135 -625,-5 Q -480,-190 -220,-195 Z" transform="rotate(180)"/><path d="M -220,-195 L -400,165 Q -560,135 -625,-5 Q -480,-190 -220,-195 Z" transform="rotate(240)"/><path d="M -220,-195 L -400,165 Q -560,135 -625,-5 Q -480,-190 -220,-195 Z" transform="rotate(300)"/></g><polygon points="223,0 111.5,193 -111.5,193 -223,0 -111.5,-193 111.5,-193" fill="none" stroke="#ffd94c" stroke-width="46"/><polygon points="108,0 54,93.5 -54,93.5 -108,0 -54,-93.5 54,-93.5" fill="none" stroke="#ffd94c" stroke-width="44"/><circle r="38" fill="#ffd94c"/></g></svg>
<div class="b" style="left:439px;top:16px;width:122px;height:38.5px;background:#00ab52;border-radius:5px;opacity:0.3;"></div>
<div class="b" style="left:568px;top:16px;width:159px;height:38.5px;background:#006bff;border-radius:5px;opacity:0.3;"></div>
<div class="b" style="left:734px;top:16px;width:119px;height:38.5px;background:#ffb200;border-radius:5px;"></div>
<div class="b" style="left:860px;top:16px;width:168px;height:38.5px;background:#3f4e60;border-radius:5px;"></div>
<div class="t" style="left:448.95px;top:4.5px;font-family:'Liberation Sans', sans-serif;font-size:25.2px;line-height:60px;color:#fff;font-weight:700;letter-spacing:0.062px;text-shadow:0 0 20px #000;opacity:0.3;">fresh</div>
<div class="t" style="left:511.75px;top:8.5px;font-family:'Liberation Mono', monospace;font-size:20px;line-height:60px;color:#fff;font-weight:700;letter-spacing:1.250px;text-shadow:0 0 20px #000;opacity:0.3;">(0)</div>
<div class="t" style="left:578.45px;top:4.5px;font-family:'Liberation Sans', sans-serif;font-size:25.2px;line-height:60px;color:#fff;font-weight:700;letter-spacing:0.143px;text-shadow:0 0 20px #000;opacity:0.3;">fetching</div>
<div class="t" style="left:677.50px;top:8.5px;font-family:'Liberation Mono', monospace;font-size:20px;line-height:60px;color:#fff;font-weight:700;letter-spacing:1.500px;text-shadow:0 0 20px #000;opacity:0.3;">(0)</div>
<div class="t" style="left:744.45px;top:4.5px;font-family:'Liberation Sans', sans-serif;font-size:25.2px;line-height:60px;color:#000;font-weight:700;letter-spacing:0.062px;">stale</div>
<div class="t" style="left:803.00px;top:8.5px;font-family:'Liberation Mono', monospace;font-size:20px;line-height:60px;color:#000;font-weight:700;letter-spacing:1.500px;">(7)</div>
<div class="t" style="left:868.70px;top:4.5px;font-family:'Liberation Sans', sans-serif;font-size:25.2px;line-height:60px;color:#fff;font-weight:700;letter-spacing:0.179px;text-shadow:0 0 20px #000;">inactive</div>
<div class="t" style="left:964.25px;top:8.5px;font-family:'Liberation Mono', monospace;font-size:20px;line-height:60px;color:#fff;font-weight:700;letter-spacing:2.000px;text-shadow:0 0 20px #000;">(16)</div>
<div class="b" style="left:439px;top:70px;width:323px;height:47.5px;background:#fff;border-radius:5px;"></div>
<div class="t" style="left:447.95px;top:63.5px;font-family:'Liberation Sans', sans-serif;font-size:25.2px;line-height:60px;color:#767676;letter-spacing:0.300px;-webkit-text-stroke-width:0.35px;">Filter</div>
<div class="b" style="left:775px;top:70px;width:354px;height:47.5px;background:#fff;border-radius:5px;"></div>
<div class="t" style="left:787.45px;top:63.5px;font-family:'Liberation Sans', sans-serif;font-size:25.2px;line-height:60px;color:#000;width:301.55px;overflow:hidden;-webkit-text-stroke-width:0.35px;">Sort by Status &gt; Last Update</div>
<svg class="i" style="left:1099.5px;top:90px" width="16" height="10" viewBox="0 0 16 10"><path d="M0 0H16L8 10z" fill="#444"/></svg>
<div class="b" style="left:1141px;top:67.5px;width:98px;height:53.5px;background:#3f4e60;border-radius:8px;"></div>
<svg class="i" style="left:1153.5px;top:81px" width="21" height="23" viewBox="0 0 21 23"><path d="M10.5 0L21 11H14.5V23H6.5V11H0z" fill="#fff"/></svg>
<div class="t" style="left:1182.45px;top:64px;font-family:'Liberation Sans', sans-serif;font-size:25.2px;line-height:60px;color:#fff;font-weight:700;letter-spacing:0.375px;">Asc</div>
<div class="b" style="left:0px;top:135px;width:54px;height:56px;background:#ffb200;"></div>
<div class="t" style="left:-2px;top:135px;width:54px;height:56px;line-height:56px;text-align:center;font-family:&quot;Liberation Sans&quot;,sans-serif;font-weight:700;font-size:27px;color:#000;text-shadow:0 0 20px #000;">1</div>
<div class="t" style="left:67.50px;top:134.5px;font-family:'Liberation Mono', monospace;font-size:25.1px;line-height:60px;color:#fff;-webkit-text-stroke-width:0.4px;">["tags","getMany",{"ids":["3","4"]}]</div>
<div class="b" style="left:0px;top:191px;width:1225px;height:2px;background:#222e3e;"></div>
<div class="b" style="left:0px;top:193px;width:54px;height:56px;background:#ffb200;"></div>
<div class="t" style="left:-2px;top:193px;width:54px;height:56px;line-height:56px;text-align:center;font-family:&quot;Liberation Sans&quot;,sans-serif;font-weight:700;font-size:27px;color:#000;text-shadow:0 0 20px #000;">1</div>
<div class="t" style="left:67.50px;top:192.5px;font-family:'Liberation Mono', monospace;font-size:25.1px;line-height:60px;color:#fff;-webkit-text-stroke-width:0.4px;">["tags","getMany",{"ids":["5","1"]}]</div>
<div class="b" style="left:0px;top:249px;width:1225px;height:2px;background:#222e3e;"></div>
<div class="b" style="left:0px;top:251px;width:54px;height:56px;background:#ffb200;"></div>
<div class="t" style="left:-2px;top:251px;width:54px;height:56px;line-height:56px;text-align:center;font-family:&quot;Liberation Sans&quot;,sans-serif;font-weight:700;font-size:27px;color:#000;text-shadow:0 0 20px #000;">2</div>
<div class="t" style="left:67.50px;top:250.5px;font-family:'Liberation Mono', monospace;font-size:25.1px;line-height:60px;color:#fff;-webkit-text-stroke-width:0.4px;">["tags","getMany",{"ids":["1","4"]}]</div>
<div class="b" style="left:0px;top:307px;width:1225px;height:2px;background:#222e3e;"></div>
<div class="b" style="left:0px;top:309px;width:54px;height:56px;background:#ffb200;"></div>
<div class="t" style="left:-2px;top:309px;width:54px;height:56px;line-height:56px;text-align:center;font-family:&quot;Liberation Sans&quot;,sans-serif;font-weight:700;font-size:27px;color:#000;text-shadow:0 0 20px #000;">1</div>
<div class="t" style="left:67.50px;top:308.5px;font-family:'Liberation Mono', monospace;font-size:25.1px;line-height:60px;color:#fff;-webkit-text-stroke-width:0.4px;">["tags","getMany",{"ids":["4","3"]}]</div>
<div class="b" style="left:0px;top:365px;width:1225px;height:2px;background:#222e3e;"></div>
<div class="b" style="left:0px;top:367px;width:54px;height:56px;background:#ffb200;"></div>
<div class="t" style="left:-2px;top:367px;width:54px;height:56px;line-height:56px;text-align:center;font-family:&quot;Liberation Sans&quot;,sans-serif;font-weight:700;font-size:27px;color:#000;text-shadow:0 0 20px #000;">3</div>
<div class="t" style="left:67.50px;top:366.5px;font-family:'Liberation Mono', monospace;font-size:25.1px;line-height:60px;color:#fff;-webkit-text-stroke-width:0.4px;">["tags","getMany",{"ids":[]}]</div>
<div class="b" style="left:0px;top:423px;width:1225px;height:2px;background:#222e3e;"></div>
<div class="b" style="left:54px;top:425px;width:1171px;height:56px;background:rgba(255,255,255,0.1);"></div>
<div class="b" style="left:54px;top:425px;width:568.36px;height:56px;background:rgba(255,255,255,0.1);"></div>
<div class="b" style="left:0px;top:425px;width:54px;height:56px;background:#ffb200;"></div>
<div class="t" style="left:-2px;top:425px;width:54px;height:56px;line-height:56px;text-align:center;font-family:&quot;Liberation Sans&quot;,sans-serif;font-weight:700;font-size:27px;color:#000;text-shadow:0 0 20px #000;">2</div>
<div class="t" style="left:67.50px;top:424.5px;font-family:'Liberation Mono', monospace;font-size:25.1px;line-height:60px;color:#fff;-webkit-text-stroke-width:0.4px;">["tags","getMany",{"ids":["3","5"]}]</div>
<div class="b" style="left:0px;top:481px;width:1225px;height:2px;background:#222e3e;"></div>
<div class="b" style="left:0px;top:483px;width:54px;height:56px;background:#ffb200;"></div>
<div class="t" style="left:-2px;top:483px;width:54px;height:56px;line-height:56px;text-align:center;font-family:&quot;Liberation Sans&quot;,sans-serif;font-weight:700;font-size:27px;color:#000;text-shadow:0 0 20px #000;">1</div>
<div class="t" style="left:67.50px;top:482.5px;font-family:'Liberation Mono', monospace;font-size:25.1px;line-height:60px;color:#fff;-webkit-text-stroke-width:0.4px;">["posts","getList",{"filter":{"q":""},"pagination":</div>
<div class="t" style="left:67.50px;top:511.70000000000005px;font-family:'Liberation Mono', monospace;font-size:25.1px;line-height:60px;color:#fff;-webkit-text-stroke-width:0.4px;">{"page":1,"perPage":10},"sort":{"field":"published_at","order":"DESC"}}]</div>
<div class="b" style="left:0px;top:565px;width:1225px;height:2px;background:#222e3e;"></div>
<div class="b" style="left:0px;top:567px;width:54px;height:56px;background:#3f4e60;"></div>
<div class="t" style="left:-2px;top:567px;width:54px;height:56px;line-height:56px;text-align:center;font-family:&quot;Liberation Sans&quot;,sans-serif;font-weight:700;font-size:27px;color:#fff;text-shadow:0 0 20px #000;">0</div>
<div class="t" style="left:67.50px;top:566.5px;font-family:'Liberation Mono', monospace;font-size:25.1px;line-height:60px;color:#fff;-webkit-text-stroke-width:0.4px;">["tags","getOne",{"id":"4"}]</div>
<div class="b" style="left:0px;top:623px;width:1225px;height:2px;background:#222e3e;"></div>
<div class="b" style="left:0px;top:625px;width:54px;height:56px;background:#3f4e60;"></div>
<div class="t" style="left:-2px;top:625px;width:54px;height:56px;line-height:56px;text-align:center;font-family:&quot;Liberation Sans&quot;,sans-serif;font-weight:700;font-size:27px;color:#fff;text-shadow:0 0 20px #000;">0</div>
<div class="t" style="left:67.50px;top:624.5px;font-family:'Liberation Mono', monospace;font-size:25.1px;line-height:60px;color:#fff;-webkit-text-stroke-width:0.4px;">["tags","getOne",{"id":"3"}]</div>
<div class="b" style="left:0px;top:681px;width:1225px;height:2px;background:#222e3e;"></div>
<div class="b" style="left:0px;top:683px;width:54px;height:56px;background:#3f4e60;"></div>
<div class="t" style="left:-2px;top:683px;width:54px;height:56px;line-height:56px;text-align:center;font-family:&quot;Liberation Sans&quot;,sans-serif;font-weight:700;font-size:27px;color:#fff;text-shadow:0 0 20px #000;">0</div>
<div class="t" style="left:67.50px;top:682.5px;font-family:'Liberation Mono', monospace;font-size:25.1px;line-height:60px;color:#fff;-webkit-text-stroke-width:0.4px;">["tags","getOne",{"id":"1"}]</div>
<div class="b" style="left:0px;top:739px;width:1225px;height:2px;background:#222e3e;"></div>
<div class="b" style="left:0px;top:741px;width:54px;height:56px;background:#3f4e60;"></div>
<div class="t" style="left:-2px;top:741px;width:54px;height:56px;line-height:56px;text-align:center;font-family:&quot;Liberation Sans&quot;,sans-serif;font-weight:700;font-size:27px;color:#fff;text-shadow:0 0 20px #000;">0</div>
<div class="t" style="left:67.50px;top:740.5px;font-family:'Liberation Mono', monospace;font-size:25.1px;line-height:60px;color:#fff;-webkit-text-stroke-width:0.4px;">["tags","getOne",{"id":"5"}]</div>
<div class="b" style="left:0px;top:797px;width:1225px;height:2px;background:#222e3e;"></div>
<div class="b" style="left:0px;top:799px;width:54px;height:56px;background:#3f4e60;"></div>
<div class="t" style="left:-2px;top:799px;width:54px;height:56px;line-height:56px;text-align:center;font-family:&quot;Liberation Sans&quot;,sans-serif;font-weight:700;font-size:27px;color:#fff;text-shadow:0 0 20px #000;">0</div>
<div class="t" style="left:67.50px;top:798.5px;font-family:'Liberation Mono', monospace;font-size:25.1px;line-height:60px;color:#fff;-webkit-text-stroke-width:0.4px;">["tags","getMany",{"ids":["3","5","4","1"]}]</div>
<div class="b" style="left:0px;top:855px;width:1225px;height:2px;background:#222e3e;"></div>
<div class="b" style="left:0px;top:857px;width:54px;height:56px;background:#3f4e60;"></div>
<div class="t" style="left:-2px;top:857px;width:54px;height:56px;line-height:56px;text-align:center;font-family:&quot;Liberation Sans&quot;,sans-serif;font-weight:700;font-size:27px;color:#fff;text-shadow:0 0 20px #000;">0</div>
<div class="t" style="left:67.50px;top:856.5px;font-family:'Liberation Mono', monospace;font-size:25.1px;line-height:60px;color:#fff;-webkit-text-stroke-width:0.4px;">["posts","getOne",{"id":"2"}]</div>
<div class="b" style="left:0px;top:913px;width:1225px;height:2px;background:#222e3e;"></div>
<div class="b" style="left:0px;top:915px;width:54px;height:56px;background:#3f4e60;"></div>
<div class="t" style="left:-2px;top:915px;width:54px;height:56px;line-height:56px;text-align:center;font-family:&quot;Liberation Sans&quot;,sans-serif;font-weight:700;font-size:27px;color:#fff;text-shadow:0 0 20px #000;">0</div>
<div class="t" style="left:67.50px;top:914.5px;font-family:'Liberation Mono', monospace;font-size:25.1px;line-height:60px;color:#fff;-webkit-text-stroke-width:0.4px;">["posts","getOne",{"id":"1"}]</div>
<div class="b" style="left:0px;top:971px;width:1225px;height:2px;background:#222e3e;"></div>
<div class="t" style="left:1269.50px;top:3.5px;font-family:'Liberation Sans', sans-serif;font-size:28px;line-height:60px;color:#fff;letter-spacing:-0.042px;-webkit-text-stroke-width:0.35px;">Actions</div>
<div class="t" style="left:1267.25px;top:65.5px;font-family:'Liberation Sans', sans-serif;font-size:28px;line-height:60px;color:#fff;-webkit-text-stroke-width:0.35px;">Data Explorer</div>
<div class="t" style="left:1268.25px;top:439px;font-family:'Liberation Sans', sans-serif;font-size:28px;line-height:60px;color:#fff;-webkit-text-stroke-width:0.35px;">Query Explorer</div>
<svg class="i" style="left:1267.00px;top:153.00px" width="17" height="17.5" viewBox="0 0 17 17.5"><path d="M0 0H17L8.5 17.5z" fill="#fff"/></svg>
<div class="t" style="left:1301.25px;top:136px;font-family:'Liberation Mono', monospace;font-size:29px;line-height:60px;color:#fff;letter-spacing:-0.47px;-webkit-text-stroke-width:0.5px;">Data</div>
<div class="t" style="left:1385.90px;top:138px;font-family:'Liberation Mono', monospace;font-size:20px;line-height:60px;color:#808080;letter-spacing:-0.25px;-webkit-text-stroke-width:0.3px;">2 items</div>
<svg class="i" style="left:1302.50px;top:200.60px" width="17" height="17.5" viewBox="0 0 17 17.5"><path d="M0 0H17L8.5 17.5z" fill="#fff"/></svg>
<div class="t" style="left:1336.55px;top:183.5999999999999px;font-family:'Liberation Mono', monospace;font-size:29px;line-height:60px;color:#fff;letter-spacing:-0.47px;-webkit-text-stroke-width:0.5px;">0</div>
<div class="t" style="left:1370.41px;top:185.5999999999999px;font-family:'Liberation Mono', monospace;font-size:20px;line-height:60px;color:#808080;letter-spacing:-0.25px;-webkit-text-stroke-width:0.3px;">3 items</div>
<div class="t" style="left:1337.10px;top:231.20000000000005px;font-family:'Liberation Mono', monospace;font-size:29px;line-height:60px;color:#fff;letter-spacing:-0.47px;-webkit-text-stroke-width:0.5px;">id:</div>
<div class="t" style="left:1404.82px;top:231.20000000000005px;font-family:'Liberation Mono', monospace;font-size:29px;line-height:60px;color:#f0168a;letter-spacing:-0.47px;-webkit-text-stroke-width:0.5px;">3</div>
<svg class="i" style="left:1338.50px;top:298.30px" width="17.5" height="16.5" viewBox="0 0 17.5 16.5"><path d="M0 0L17.5 8.25L0 16.5z" fill="#fff"/></svg>
<div class="t" style="left:1370.60px;top:278.79999999999995px;font-family:'Liberation Mono', monospace;font-size:29px;line-height:60px;color:#fff;letter-spacing:-0.47px;-webkit-text-stroke-width:0.5px;">name</div>
<div class="t" style="left:1455.25px;top:280.79999999999995px;font-family:'Liberation Mono', monospace;font-size:20px;line-height:60px;color:#808080;letter-spacing:-0.25px;-webkit-text-stroke-width:0.3px;">1 item</div>
<div class="t" style="left:1336.60px;top:326.4000000000001px;font-family:'Liberation Mono', monospace;font-size:29px;line-height:60px;color:#fff;letter-spacing:-0.47px;-webkit-text-stroke-width:0.5px;">published:</div>
<div class="t" style="left:1522.83px;top:326.4000000000001px;font-family:'Liberation Mono', monospace;font-size:29px;line-height:60px;color:#f0168a;letter-spacing:-0.47px;-webkit-text-stroke-width:0.5px;">true</div>
<svg class="i" style="left:1303.00px;top:393.50px" width="17.5" height="16.5" viewBox="0 0 17.5 16.5"><path d="M0 0L17.5 8.25L0 16.5z" fill="#fff"/></svg>
<div class="t" style="left:1336.30px;top:374.0px;font-family:'Liberation Mono', monospace;font-size:29px;line-height:60px;color:#fff;letter-spacing:-0.47px;-webkit-text-stroke-width:0.5px;">1</div>
<div class="t" style="left:1370.16px;top:376.0px;font-family:'Liberation Mono', monospace;font-size:20px;line-height:60px;color:#808080;letter-spacing:-0.25px;-webkit-text-stroke-width:0.3px;">3 items</div>
<div class="b" style="left:1273px;top:187px;width:4px;height:245px;background:rgba(0,0,0,0.15);"></div>
<div class="b" style="left:1308px;top:232px;width:4px;height:150px;background:rgba(0,0,0,0.15);"></div>
<svg class="i" style="left:1267.00px;top:525.00px" width="17" height="17.5" viewBox="0 0 17 17.5"><path d="M0 0H17L8.5 17.5z" fill="#fff"/></svg>
<div class="t" style="left:1302.00px;top:508px;font-family:'Liberation Mono', monospace;font-size:29px;line-height:60px;color:#fff;letter-spacing:-0.47px;-webkit-text-stroke-width:0.5px;">Query</div>
<div class="t" style="left:1403.58px;top:510px;font-family:'Liberation Mono', monospace;font-size:20px;line-height:60px;color:#808080;letter-spacing:-0.25px;-webkit-text-stroke-width:0.3px;">16 items</div>
<div class="t" style="left:1302.55px;top:555.5999999999999px;font-family:'Liberation Mono', monospace;font-size:29px;line-height:60px;color:#fff;letter-spacing:-0.47px;-webkit-text-stroke-width:0.5px;">abortSignalConsumed:</div>
<div class="t" style="left:1658.08px;top:555.5999999999999px;font-family:'Liberation Mono', monospace;font-size:29px;line-height:60px;color:#f0168a;letter-spacing:-0.47px;-webkit-text-stroke-width:0.5px;">false</div>
<div class="t" style="left:1301.80px;top:603.2px;font-family:'Liberation Mono', monospace;font-size:29px;line-height:60px;color:#fff;letter-spacing:-0.47px;-webkit-text-stroke-width:0.5px;">hadObservers:</div>
<div class="t" style="left:1538.82px;top:603.2px;font-family:'Liberation Mono', monospace;font-size:29px;line-height:60px;color:#f0168a;letter-spacing:-0.47px;-webkit-text-stroke-width:0.5px;">true</div>
<div class="t" style="left:1302.30px;top:650.8px;font-family:'Liberation Mono', monospace;font-size:29px;line-height:60px;color:#fff;letter-spacing:-0.47px;-webkit-text-stroke-width:0.5px;">defaultOptions:</div>
<svg class="i" style="left:1303.00px;top:717.90px" width="17.5" height="16.5" viewBox="0 0 17.5 16.5"><path d="M0 0L17.5 8.25L0 16.5z" fill="#fff"/></svg>
<div class="t" style="left:1336.55px;top:698.4000000000001px;font-family:'Liberation Mono', monospace;font-size:29px;line-height:60px;color:#fff;letter-spacing:-0.47px;-webkit-text-stroke-width:0.5px;">options</div>
<div class="t" style="left:1471.99px;top:700.4000000000001px;font-family:'Liberation Mono', monospace;font-size:20px;line-height:60px;color:#808080;letter-spacing:-0.25px;-webkit-text-stroke-width:0.3px;">9 items</div>
<div class="t" style="left:1303.05px;top:746.0px;font-family:'Liberation Mono', monospace;font-size:29px;line-height:60px;color:#fff;letter-spacing:-0.47px;-webkit-text-stroke-width:0.5px;">meta:</div>
<div class="t" style="left:1302.55px;top:793.5999999999999px;font-family:'Liberation Mono', monospace;font-size:29px;line-height:60px;color:#fff;letter-spacing:-0.47px;-webkit-text-stroke-width:0.5px;">cacheTime:</div>
<div class="t" style="left:1488.78px;top:793.5999999999999px;font-family:'Liberation Mono', monospace;font-size:29px;line-height:60px;color:#f0168a;letter-spacing:-0.47px;-webkit-text-stroke-width:0.5px;">300000</div>
<svg class="i" style="left:1303.00px;top:860.70px" width="17.5" height="16.5" viewBox="0 0 17.5 16.5"><path d="M0 0L17.5 8.25L0 16.5z" fill="#fff"/></svg>
<div class="t" style="left:1336.55px;top:841.2px;font-family:'Liberation Mono', monospace;font-size:29px;line-height:60px;color:#fff;letter-spacing:-0.47px;-webkit-text-stroke-width:0.5px;">observers</div>
<div class="t" style="left:1505.85px;top:843.2px;font-family:'Liberation Mono', monospace;font-size:20px;line-height:60px;color:#808080;letter-spacing:-0.25px;-webkit-text-stroke-width:0.3px;">2 items</div>
<svg class="i" style="left:1303.00px;top:908.30px" width="17.5" height="16.5" viewBox="0 0 17.5 16.5"><path d="M0 0L17.5 8.25L0 16.5z" fill="#fff"/></svg>
<div class="t" style="left:1336.55px;top:888.8px;font-family:'Liberation Mono', monospace;font-size:29px;line-height:60px;color:#fff;letter-spacing:-0.47px;-webkit-text-stroke-width:0.5px;">cache</div>
<div class="t" style="left:1438.13px;top:890.8px;font-family:'Liberation Mono', monospace;font-size:20px;line-height:60px;color:#808080;letter-spacing:-0.25px;-webkit-text-stroke-width:0.3px;">4 items</div>
<div class="b" style="left:1273px;top:562px;width:4px;height:360px;background:rgba(0,0,0,0.15);"></div>
</div>
</body></html>
